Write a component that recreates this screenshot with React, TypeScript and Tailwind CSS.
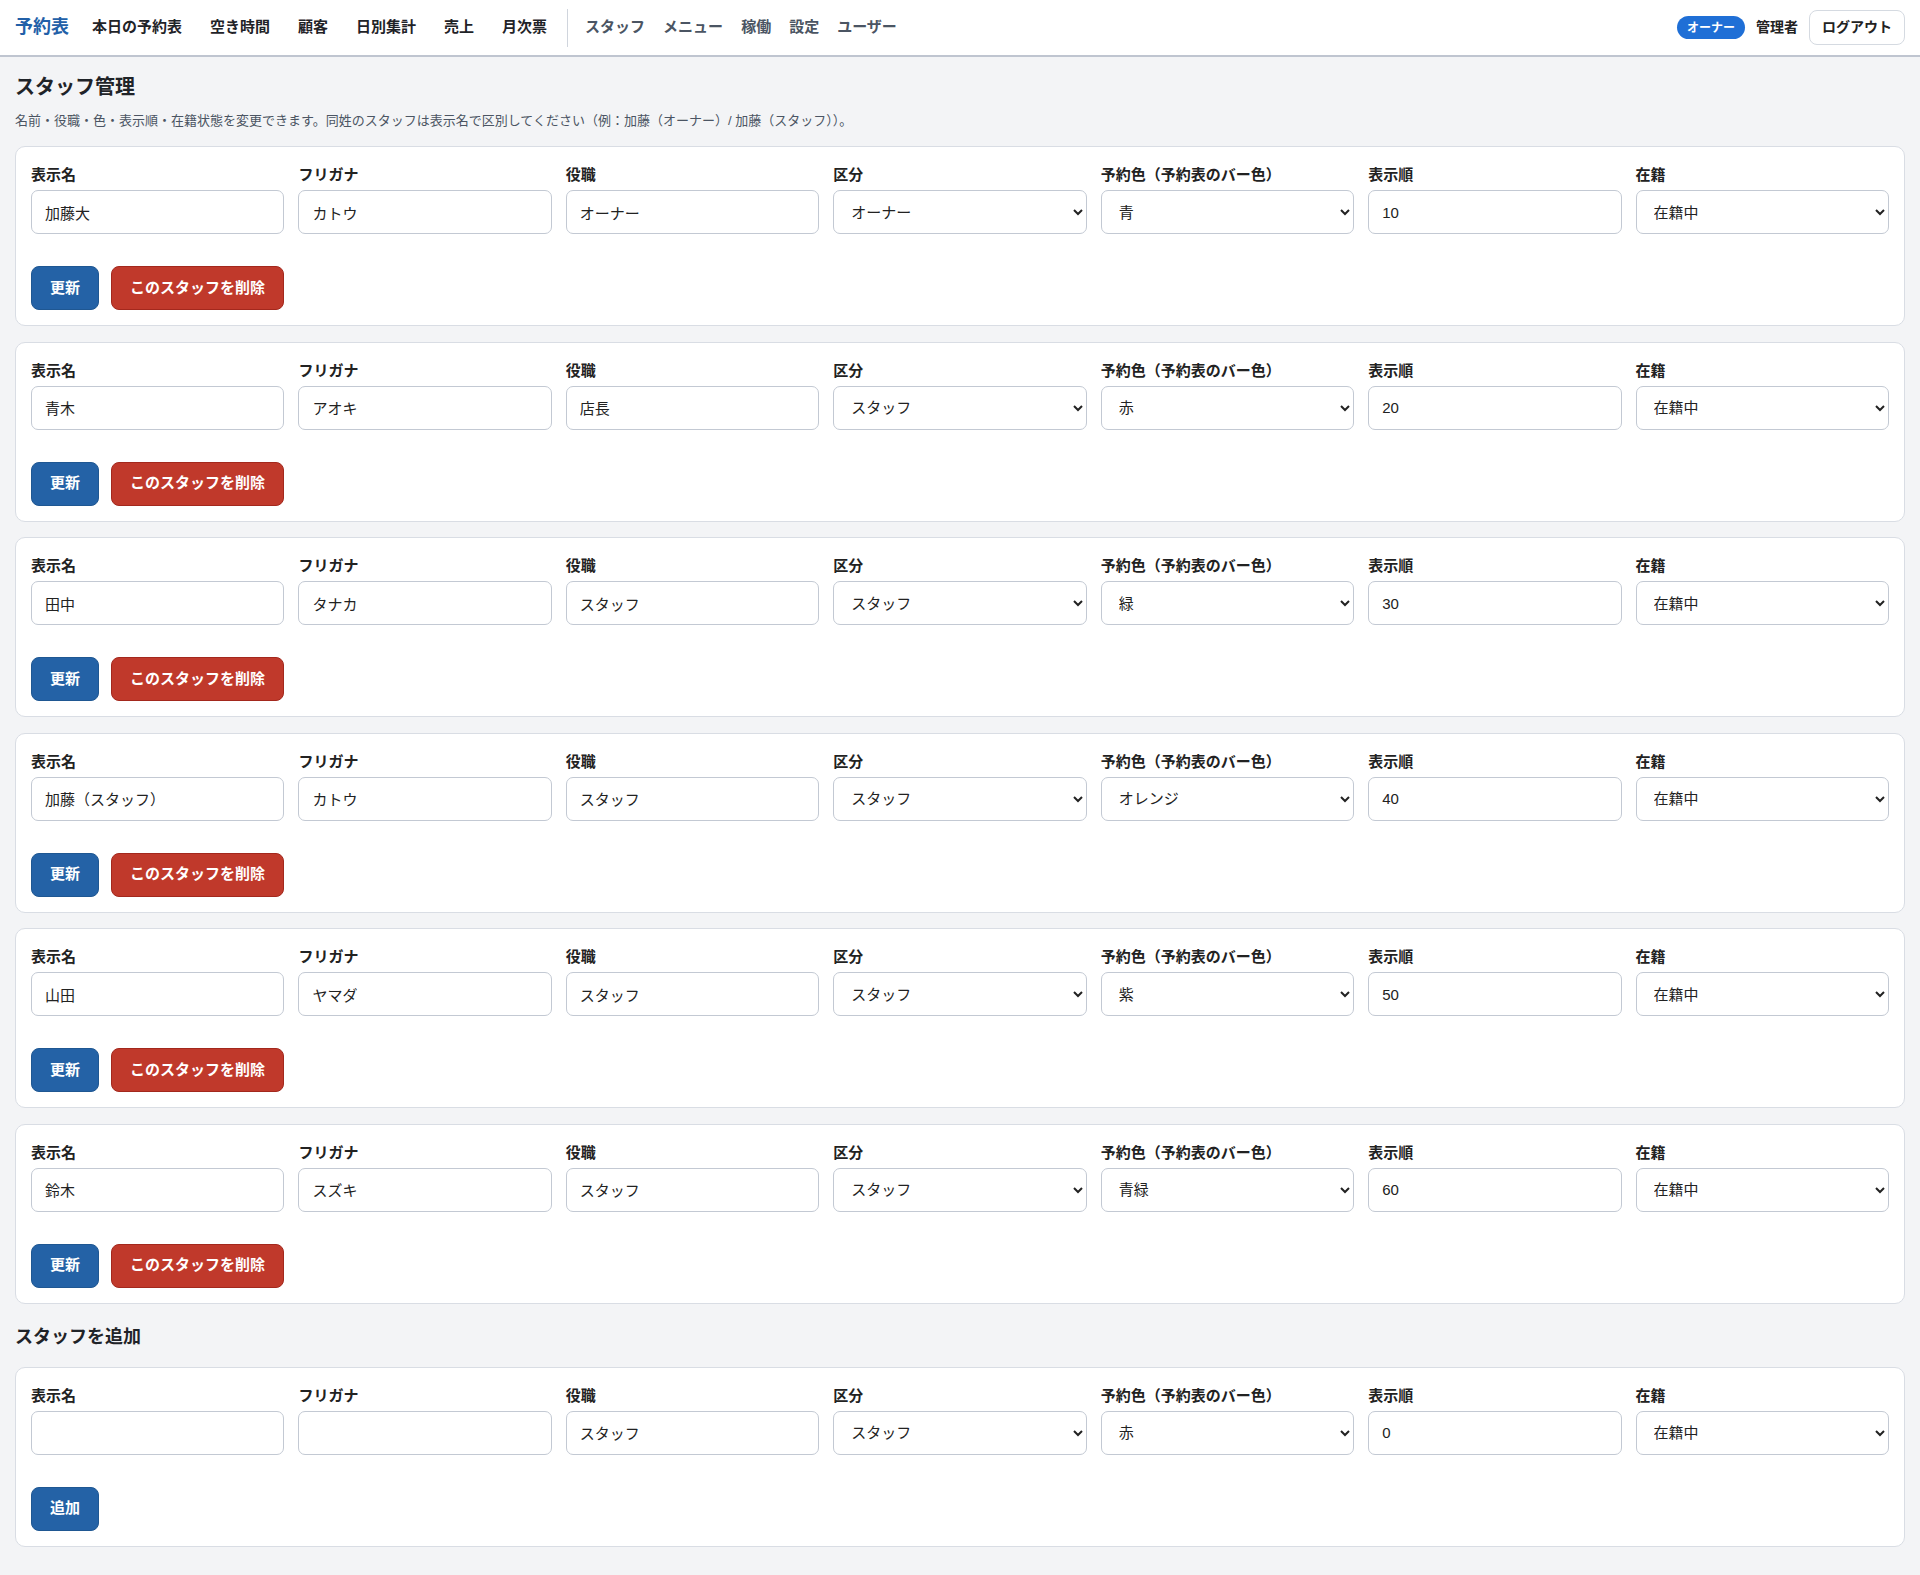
import { useState } from 'react'

type Staff = {
  name: string
  kana: string
  title: string
  kind: string
  color: string
  order: string
  status: string
}

const staffList: Staff[] = [
  { name: '加藤大', kana: 'カトウ', title: 'オーナー', kind: 'オーナー', color: '青', order: '10', status: '在籍中' },
  { name: '青木', kana: 'アオキ', title: '店長', kind: 'スタッフ', color: '赤', order: '20', status: '在籍中' },
  { name: '田中', kana: 'タナカ', title: 'スタッフ', kind: 'スタッフ', color: '緑', order: '30', status: '在籍中' },
  { name: '加藤（スタッフ）', kana: 'カトウ', title: 'スタッフ', kind: 'スタッフ', color: 'オレンジ', order: '40', status: '在籍中' },
  { name: '山田', kana: 'ヤマダ', title: 'スタッフ', kind: 'スタッフ', color: '紫', order: '50', status: '在籍中' },
  { name: '鈴木', kana: 'スズキ', title: 'スタッフ', kind: 'スタッフ', color: '青緑', order: '60', status: '在籍中' }
]

const kinds = ['オーナー', 'スタッフ']
const colors = ['青', '赤', '緑', 'オレンジ', '紫', '青緑']
const statuses = ['在籍中', '退職']

const mainNav = ['本日の予約表', '空き時間', '顧客', '日別集計', '売上', '月次票']
const adminNav = ['スタッフ', 'メニュー', '稼働', '設定', 'ユーザー']

const inputCls =
  'h-[44px] w-full rounded-[7px] border border-[#c3c9d3] bg-white px-[13px] text-[15px] text-[#222] outline-none'

function Field({ label, children }: { label: string; children: React.ReactNode }) {
  return (
    <label className="block">
      <div className="text-[15px] font-bold leading-[21px] text-[#222]">{label}</div>
      <div className="mt-[5px]">{children}</div>
    </label>
  )
}

function StaffFields({ s }: { s: Staff }) {
  return (
    <div className="grid grid-cols-7 gap-x-[14px]">
      <Field label="表示名">
        <input className={inputCls} defaultValue={s.name} />
      </Field>
      <Field label="フリガナ">
        <input className={inputCls} defaultValue={s.kana} />
      </Field>
      <Field label="役職">
        <input className={inputCls} defaultValue={s.title} />
      </Field>
      <Field label="区分">
        <select className={inputCls} defaultValue={s.kind}>
          {kinds.map((k) => (
            <option key={k}>{k}</option>
          ))}
        </select>
      </Field>
      <Field label="予約色（予約表のバー色）">
        <select className={inputCls} defaultValue={s.color}>
          {colors.map((c) => (
            <option key={c}>{c}</option>
          ))}
        </select>
      </Field>
      <Field label="表示順">
        <input className={inputCls} defaultValue={s.order} />
      </Field>
      <Field label="在籍">
        <select className={inputCls} defaultValue={s.status}>
          {statuses.map((st) => (
            <option key={st}>{st}</option>
          ))}
        </select>
      </Field>
    </div>
  )
}

const blueBtn =
  'h-[44px] rounded-[8px] border border-[#1f5792] bg-[#2462a6] px-[18px] text-[15px] font-bold text-white'
const redBtn =
  'h-[44px] rounded-[8px] border border-[#a3281d] bg-[#c0392b] px-[18px] text-[15px] font-bold text-white'

export default function App() {
  const [list] = useState(staffList)

  return (
    <div className="min-h-screen bg-[#f3f4f6] pb-[28px] font-['Liberation_Sans','Noto_Sans_CJK_JP',sans-serif] text-[#222]">
      {/* Header */}
      <header className="flex h-[57px] items-center border-b-2 border-[#bfc5d0] bg-white px-[15px]">
        <span className="text-[18px] font-bold text-[#2260a8]">予約表</span>
        <nav className="ml-[23px] flex gap-[28px] text-[15px] font-bold text-[#1f2328]">
          {mainNav.map((n) => (
            <a key={n} href="#">
              {n}
            </a>
          ))}
        </nav>
        <div className="ml-[20px] mr-[17px] h-[38px] w-px bg-[#d0d5dd]" />
        <nav className="flex gap-[18px] text-[15px] font-bold text-[#4b5563]">
          {adminNav.map((n) => (
            <a key={n} href="#">
              {n}
            </a>
          ))}
        </nav>
        <div className="ml-auto flex items-center gap-[11px]">
          <span className="flex h-[23px] items-center rounded-full bg-[#1f6fd6] px-[10px] text-[12px] font-bold text-white">
            オーナー
          </span>
          <span className="text-[14px] font-bold text-[#222]">管理者</span>
          <button className="h-[35px] rounded-[8px] border border-[#d5dae1] bg-white px-[12px] text-[14px] font-bold text-[#222]">
            ログアウト
          </button>
        </div>
      </header>

      <main className="px-[15px] pt-[15px]">
        <h1 className="text-[20px] font-bold leading-[30px] text-[#1f2328]">スタッフ管理</h1>
        <p className="mt-[9px] text-[13px] leading-[20px] text-[#4b5563]">
          名前・役職・色・表示順・在籍状態を変更できます。同姓のスタッフは表示名で区別してください（例：加藤（オーナー）/ 加藤（スタッフ））。
        </p>

        <div className="mt-[15px] flex flex-col gap-[15.5px]">
          {list.map((s) => (
            <div key={s.order} className="rounded-[10px] border border-[#d9dde4] bg-white px-[15px] pb-[15px] pt-[17px]">
              <StaffFields s={s} />
              <div className="mt-[32px] flex gap-[12px]">
                <button className={blueBtn}>更新</button>
                <button className={redBtn}>このスタッフを削除</button>
              </div>
            </div>
          ))}
        </div>

        <h2 className="mb-[16px] mt-[20px] text-[18px] font-bold leading-[27px] text-[#1f2328]">スタッフを追加</h2>
        <div className="rounded-[10px] border border-[#d9dde4] bg-white px-[15px] pb-[15px] pt-[17px]">
          <StaffFields
            s={{ name: '', kana: '', title: 'スタッフ', kind: 'スタッフ', color: '赤', order: '0', status: '在籍中' }}
          />
          <div className="mt-[32px] flex gap-[12px]">
            <button className={blueBtn}>追加</button>
          </div>
        </div>
      </main>
    </div>
  )
}
